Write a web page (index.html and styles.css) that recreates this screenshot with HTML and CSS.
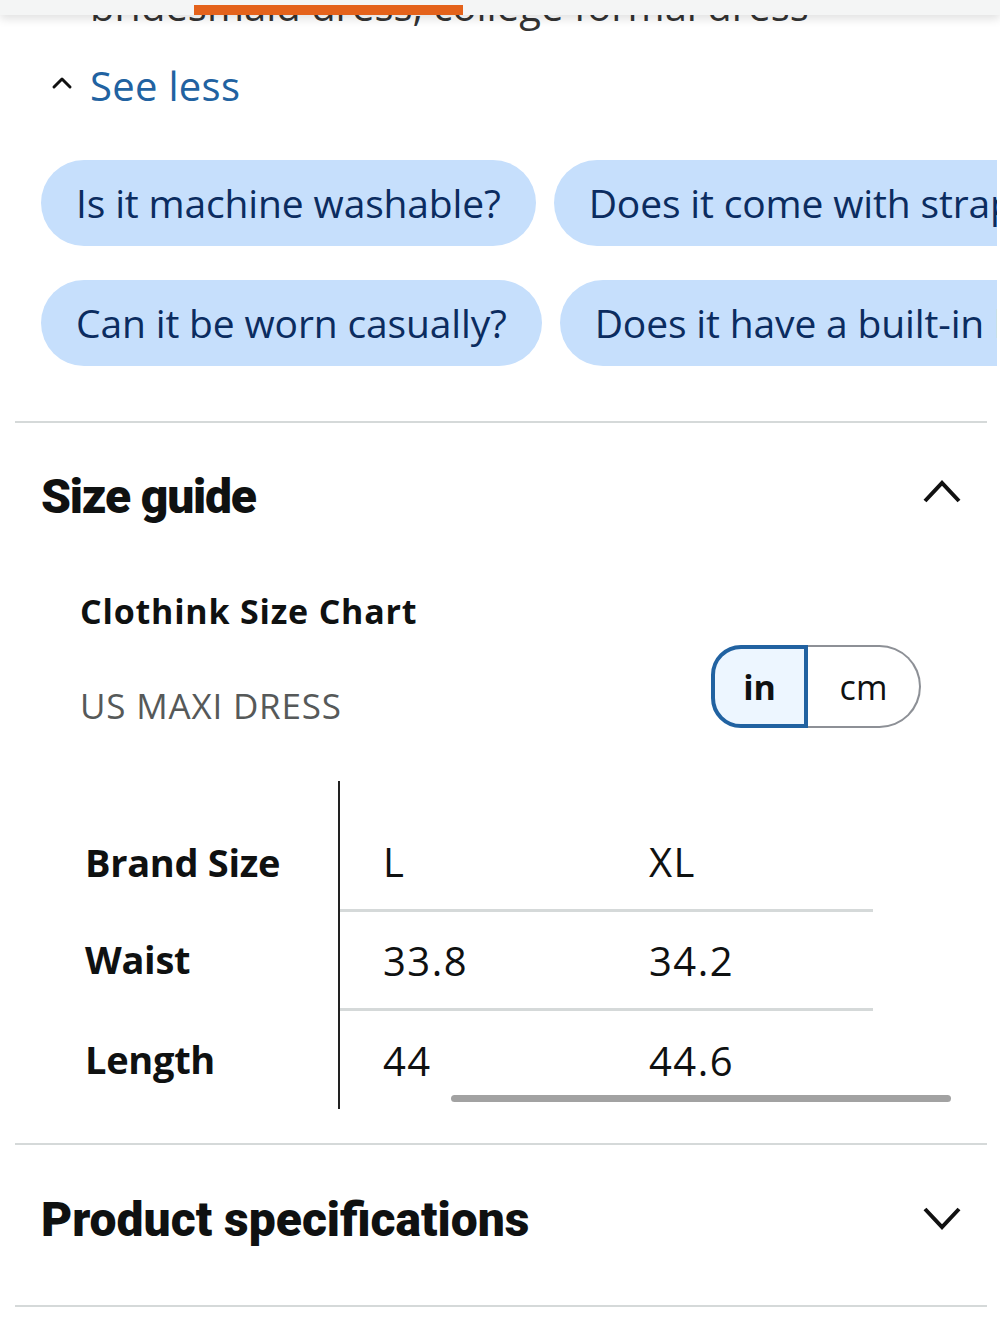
FILE: index.html
```html
<!DOCTYPE html>
<html lang="en">
<head>
<meta charset="utf-8">
<title>Size guide</title>
<link rel="stylesheet" href="styles.css">
</head>
<body>
<div class="topbar"><div class="progress"></div></div>
<div class="page">
  <div class="cut-text">bridesmaid dress, college formal dress</div>
  <div class="see-less">
    <svg class="caret" width="22" height="14" viewBox="0 0 22 14"><path d="M3 11 L11 3 L19 11" fill="none" stroke="#111" stroke-width="3" stroke-linecap="round" stroke-linejoin="round"/></svg>
    <span>See less</span>
  </div>
  <div class="chips">
    <div class="chip-row">
      <span class="chip">Is it machine washable?</span>
      <span class="chip">Does it come with straps?</span>
    </div>
    <div class="chip-row">
      <span class="chip">Can it be worn casually?</span>
      <span class="chip">Does it have a built-in bra?</span>
    </div>
  </div>
  <hr class="divider">
  <section class="section">
    <div class="section-head">
      <h2>Size guide</h2>
      <svg class="chev up" width="40" height="28" viewBox="0 0 40 28"><path d="M3 24 L20 6 L37 24" fill="none" stroke="#111" stroke-width="4" stroke-linejoin="miter"/></svg>
    </div>
    <div class="chart">
      <div class="chart-title">Clothink Size Chart</div>
      <div class="chart-sub">
        <span class="region">US MAXI DRESS</span>
        <div class="toggle">
          <span class="seg seg-on">in</span>
          <span class="seg seg-off">cm</span>
        </div>
      </div>
      <div class="table-wrap">
        <div class="table">
          <div class="th r1">Brand Size</div>
          <div class="td r1 c1">L</div>
          <div class="td r1 c2">XL</div>
          <div class="th">Waist</div>
          <div class="td c1 line">33.8</div>
          <div class="td c2 line">34.2</div>
          <div class="th">Length</div>
          <div class="td c1 line">44</div>
          <div class="td c2 line">44.6</div>
        </div>
        <div class="scrollbar"></div>
      </div>
    </div>
  </section>
  <hr class="divider">
  <section class="section">
    <div class="section-head spec">
      <h2>Product specifications</h2>
      <svg class="chev" width="40" height="28" viewBox="0 0 40 28"><path d="M3 4 L20 22 L37 4" fill="none" stroke="#111" stroke-width="4" stroke-linejoin="miter"/></svg>
    </div>
  </section>
  <hr class="divider">
</div>
</body>
</html>
```
FILE: styles.css
```css
html, body {
  margin: 0;
  padding: 0;
  background: #fff;
}
body {
  font-family: "Open Sans", "Noto Sans", sans-serif;
  color: #0f1111;
  width: 1000px;
  overflow: hidden;
}
.topbar {
  position: absolute;
  left: 0;
  top: 0;
  width: 1000px;
  height: 15px;
  background: #f4f5f5;
  box-shadow: 0 4px 10px rgba(0,0,0,0.12);
  z-index: 2;
}
.progress {
  position: absolute;
  left: 194px;
  top: 5px;
  width: 269px;
  height: 10px;
  background: #e4621b;
}
.cut-text {
  font-size: 40px;
  line-height: 48px;
  height: 48px;
  margin-top: -18px;
  padding-left: 90px;
  color: #333;
  white-space: nowrap;
}
.see-less {
  display: flex;
  align-items: center;
  gap: 17px;
  padding-left: 51px;
  margin-top: 30px;
  height: 50px;
  color: #2162a1;
  font-size: 40px;
  letter-spacing: 0.3px;
}
.caret {
  margin-top: -4px;
}
.chips {
  margin-top: 50px;
  margin-left: 41px;
  width: 956px;
  overflow: hidden;
  display: flex;
  flex-direction: column;
  gap: 34px;
}
.chip-row {
  display: flex;
  gap: 18px;
  white-space: nowrap;
}
.chip {
  flex: none;
  height: 86px;
  line-height: 86px;
  padding: 0 35px;
  border-radius: 43px;
  background: #c6dffc;
  color: #0b2c60;
  font-size: 39px;
  letter-spacing: -0.15px;
}
.divider {
  border: 0;
  height: 2px;
  background: #d5d9d9;
  margin: 0 13px 0 15px;
}
.chips + .divider {
  margin-top: 55px;
}
.section-head {
  display: flex;
  align-items: center;
  justify-content: space-between;
  padding: 0 38px 0 41px;
  height: 146px;
  box-sizing: border-box;
}
.section-head.spec {
  height: 160px;
  padding-bottom: 12px;
}
.section-head h2 {
  margin: 0;
  font-family: "Roboto", sans-serif;
  font-weight: 900;
  font-size: 48px;
  letter-spacing: -1.2px;
  color: #0f1111;
}
.section-head.spec h2 {
  letter-spacing: 0;
}
.chev.up {
  margin-top: -10px;
}
.chart {
  padding-left: 80px;
}
.chart-title {
  margin-top: 22px;
  font-weight: 700;
  font-size: 34px;
  line-height: 40px;
  letter-spacing: 0.8px;
}
.chart-sub {
  display: flex;
  justify-content: space-between;
  align-items: center;
  margin-top: 13px;
  padding-right: 79px;
}
.region {
  color: #565959;
  font-size: 35px;
  letter-spacing: 0.8px;
  margin-top: 38px;
}
.toggle {
  display: flex;
  height: 83px;
}
.seg {
  display: flex;
  align-items: center;
  justify-content: center;
  font-size: 34px;
  box-sizing: border-box;
}
.seg-on {
  width: 97px;
  background: #edf6ff;
  border: 4px solid #2162a1;
  border-radius: 30px 0 0 30px;
  font-weight: 700;
  color: #0f1111;
}
.seg-off {
  width: 113px;
  border: 2px solid #8d9096;
  border-left: 0;
  border-radius: 0 42px 42px 0;
  color: #0f1111;
}
.table-wrap {
  position: relative;
  margin-top: 52px;
  margin-left: -32px;
  height: 328px;
  margin-bottom: 34px;
}
.table {
  display: grid;
  grid-template-columns: 292px 266px 267px;
  grid-template-rows: 128px 99px 101px;
  font-size: 38px;
}
.th {
  display: flex;
  align-items: center;
  padding-left: 37px;
  font-weight: 700;
  border-right: 2px solid #222;
  letter-spacing: -0.3px;
}
.th.r1 {
  padding-top: 33px;
}
.td {
  display: flex;
  align-items: center;
  padding-left: 43px;
  color: #0f1111;
  font-size: 40px;
  letter-spacing: 1.5px;
}
.td.r1 {
  padding-top: 33px;
}
.td.line {
  border-top: 3px solid #d5d9d9;
}
.scrollbar {
  position: absolute;
  left: 403px;
  top: 314px;
  width: 500px;
  height: 7px;
  border-radius: 4px;
  background: #a2a2a2;
}
```
